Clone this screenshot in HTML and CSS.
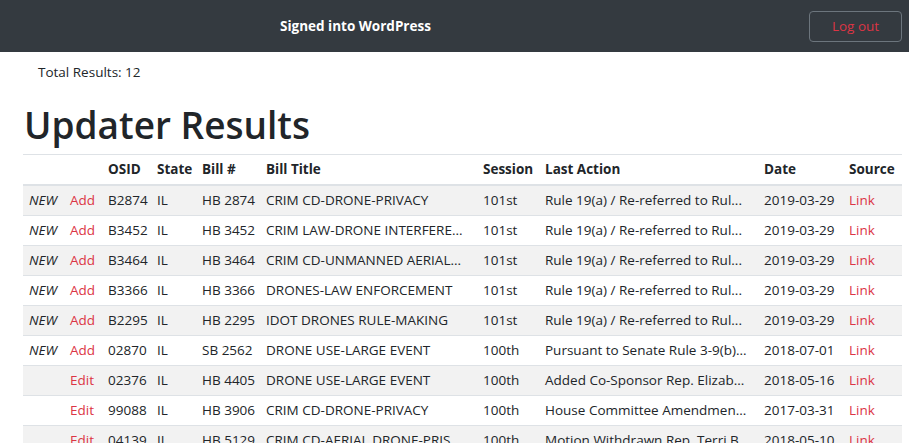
FILE: index.html
```html
<!DOCTYPE html>
<html lang="en">
<head>
<meta charset="utf-8">
<title>Updater Results</title>
<link rel="stylesheet" href="styles.css">
</head>
<body>
<nav class="navbar">
  <span class="brand">Signed into WordPress</span>
  <button class="logout">Log out</button>
</nav>
<main class="content">
  <p class="total">Total Results: 12</p>
  <h1 class="title">Updater Results</h1>
  <table class="results">
    <colgroup>
      <col class="c-new"><col class="c-act"><col class="c-osid"><col class="c-state"><col class="c-bill"><col class="c-title"><col class="c-session"><col class="c-last"><col class="c-date"><col class="c-src">
    </colgroup>
    <thead>
      <tr><th></th><th></th><th>OSID</th><th>State</th><th>Bill #</th><th>Bill Title</th><th>Session</th><th>Last Action</th><th>Date</th><th>Source</th></tr>
    </thead>
    <tbody>
      <tr><td class="new">NEW</td><td><a href="#">Add</a></td><td>B2874</td><td>IL</td><td>HB 2874</td><td>CRIM CD-DRONE-PRIVACY</td><td>101st</td><td>Rule 19(a) / Re-referred to Rul...</td><td>2019-03-29</td><td><a href="#">Link</a></td></tr>
      <tr><td class="new">NEW</td><td><a href="#">Add</a></td><td>B3452</td><td>IL</td><td>HB 3452</td><td>CRIM LAW-DRONE INTERFERE...</td><td>101st</td><td>Rule 19(a) / Re-referred to Rul...</td><td>2019-03-29</td><td><a href="#">Link</a></td></tr>
      <tr><td class="new">NEW</td><td><a href="#">Add</a></td><td>B3464</td><td>IL</td><td>HB 3464</td><td>CRIM CD-UNMANNED AERIAL...</td><td>101st</td><td>Rule 19(a) / Re-referred to Rul...</td><td>2019-03-29</td><td><a href="#">Link</a></td></tr>
      <tr><td class="new">NEW</td><td><a href="#">Add</a></td><td>B3366</td><td>IL</td><td>HB 3366</td><td>DRONES-LAW ENFORCEMENT</td><td>101st</td><td>Rule 19(a) / Re-referred to Rul...</td><td>2019-03-29</td><td><a href="#">Link</a></td></tr>
      <tr><td class="new">NEW</td><td><a href="#">Add</a></td><td>B2295</td><td>IL</td><td>HB 2295</td><td>IDOT DRONES RULE-MAKING</td><td>101st</td><td>Rule 19(a) / Re-referred to Rul...</td><td>2019-03-29</td><td><a href="#">Link</a></td></tr>
      <tr><td class="new">NEW</td><td><a href="#">Add</a></td><td>02870</td><td>IL</td><td>SB 2562</td><td>DRONE USE-LARGE EVENT</td><td>100th</td><td>Pursuant to Senate Rule 3-9(b)...</td><td>2018-07-01</td><td><a href="#">Link</a></td></tr>
      <tr><td class="new"></td><td><a href="#">Edit</a></td><td>02376</td><td>IL</td><td>HB 4405</td><td>DRONE USE-LARGE EVENT</td><td>100th</td><td>Added Co-Sponsor Rep. Elizab...</td><td>2018-05-16</td><td><a href="#">Link</a></td></tr>
      <tr><td class="new"></td><td><a href="#">Edit</a></td><td>99088</td><td>IL</td><td>HB 3906</td><td>CRIM CD-DRONE-PRIVACY</td><td>100th</td><td>House Committee Amendmen...</td><td>2017-03-31</td><td><a href="#">Link</a></td></tr>
      <tr><td class="new"></td><td><a href="#">Edit</a></td><td>04139</td><td>IL</td><td>HB 5129</td><td>CRIM CD-AERIAL DRONE-PRIS...</td><td>100th</td><td>Motion Withdrawn Rep. Terri B...</td><td>2018-05-10</td><td><a href="#">Link</a></td></tr>
    </tbody>
  </table>
</main>
</body>
</html>
```
FILE: styles.css
```css
* { box-sizing: border-box; }
html, body { margin: 0; padding: 0; }
body {
  font-family: "Open Sans", "Noto Sans", sans-serif;
  font-size: 13.5px;
  line-height: 21px;
  color: #212529;
  background: #fff;
}
.navbar {
  height: 52px;
  background: #343a40;
  display: flex;
  align-items: center;
  padding: 0 7px 0 280px;
}
.brand {
  color: #fff;
  font-weight: 700;
  font-size: 13.5px;
  flex: 1;
}
.logout {
  width: 93px;
  height: 31px;
  background: transparent;
  border: 1px solid #6c757d;
  border-radius: 4px;
  color: #dc3545;
  font-family: inherit;
  font-size: 13.5px;
  padding: 0;
}
.content {
  padding: 0 7px 0 23px;
}
.total {
  margin: 0;
  padding: 10px 15px 0;
  line-height: 21px;
}
.title {
  margin: 18px 0 5px 1px;
  font-size: 37px;
  font-weight: 600;
  line-height: 48px;
}
.results {
  width: 879px;
  border-collapse: collapse;
  table-layout: fixed;
}
.c-new { width: 41px; }
.c-act { width: 38px; }
.c-osid { width: 49px; }
.c-state { width: 45px; }
.c-bill { width: 64px; }
.c-title { width: 217px; }
.c-session { width: 62px; }
.c-last { width: 219px; }
.c-date { width: 85px; }
.c-src { width: 59px; }
.results th, .results td {
  padding: 4px 6px 4px 6px;
  text-align: left;
  white-space: nowrap;
  overflow: hidden;
  border-top: 1px solid #dee2e6;
}
.results th {
  font-weight: 700;
  padding: 4px 6px 4px 6px;
  border-bottom: 2px solid #dee2e6;
}
.results tbody tr:nth-child(odd) { background: #f2f2f2; }
.results a { color: #dc3545; text-decoration: none; }
.new { font-style: italic; }
```
